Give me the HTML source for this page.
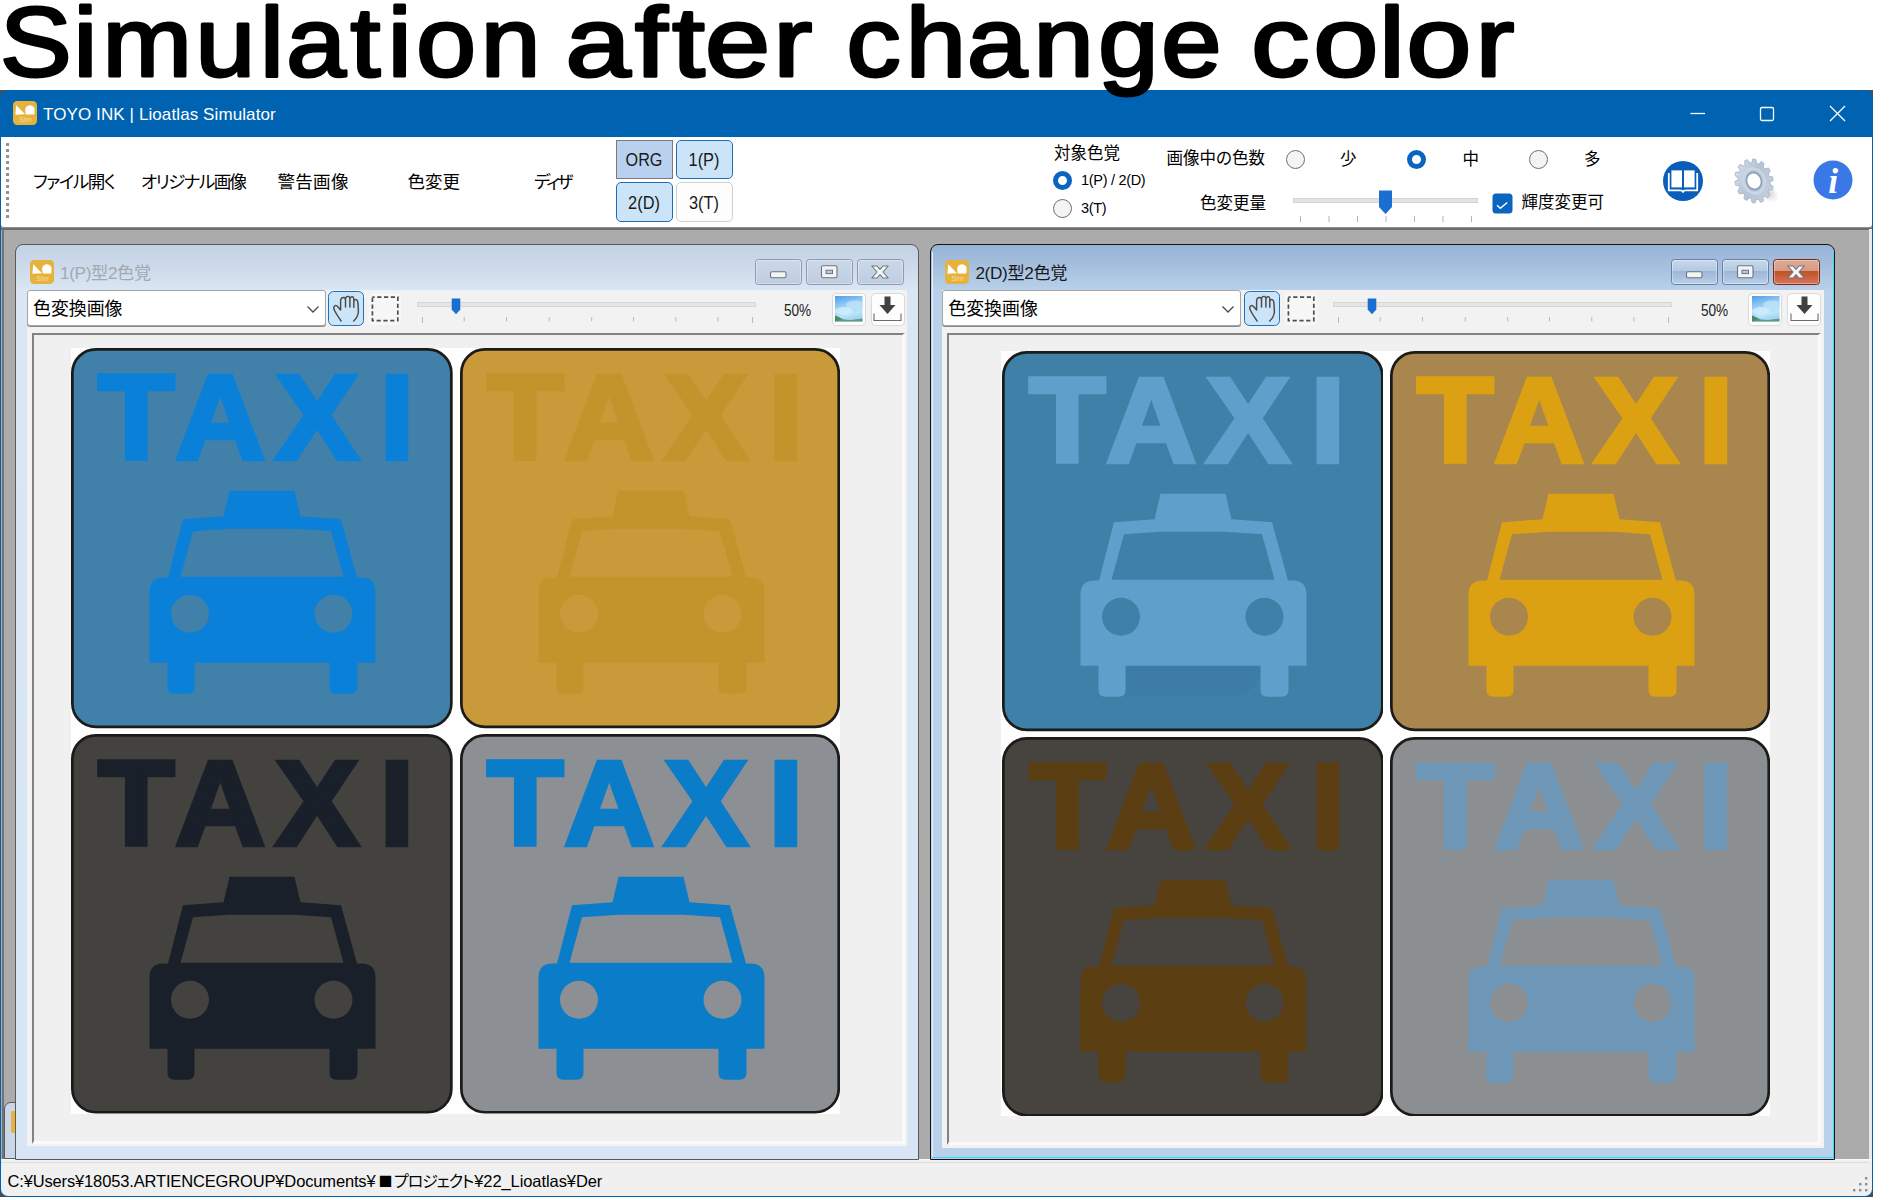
<!DOCTYPE html>
<html lang="ja"><head><meta charset="utf-8"><title>Simulation after change color</title>
<style>
*{box-sizing:border-box;margin:0;padding:0}
html,body{width:1900px;height:1200px;overflow:hidden;background:#fff}
body{position:relative;font-family:"Liberation Sans","Noto Sans CJK JP",sans-serif;color:#000}
div,svg{position:absolute}
.t{white-space:nowrap;line-height:1;font-size:17px}
.jp{font-family:"Liberation Sans","Noto Sans CJK JP",sans-serif;font-size:17.5px;font-feature-settings:"palt"}
#hdr{left:0;top:0;width:1900px;height:140px;z-index:50}
.bb{border:1px solid #1e6fbe;background:#cce4f7;border-radius:4px}
.rad{width:19.5px;height:19.5px;border-radius:50%;border:1.3px solid #707070;background:#f4f4f4}
.rad.on{border:5.5px solid #0a64c0;background:#fff}
</style></head>
<body>
<svg id="hdr" viewBox="0 0 1900 140"><g font-family="Liberation Sans, sans-serif" font-size="97.5" fill="#000" stroke="#000" stroke-width="3" stroke-linejoin="round" stroke-linecap="round"><text transform="scale(1.1005 1)" x="0.0 66.9 93.2 177.6 236.2 260.0 318.4 352.3 378.2 436.8" y="75.6">Simulation</text>
<text transform="scale(1.2003 1)" x="471.2 529.0 560.1 587.3 644.3" y="75.6">after</text>
<text transform="scale(1.1106 1)" x="762.2 815.5 870.7 930.5 988.8 1045.6" y="75.6">change</text>
<text transform="scale(1.1947 1)" x="1047.4 1099.4 1154.2 1177.2 1235.0" y="75.6">color</text>
</g></svg>
<div style="left:0px;top:90px;width:8px;height:8px;background:#4d4d4d"></div>
<div style="left:1865px;top:90px;width:8px;height:8px;background:#4d4d4d"></div>
<div style="left:0px;top:1189px;width:8px;height:8px;background:#4d4d4d"></div>
<div style="left:1865px;top:1189px;width:8px;height:8px;background:#4d4d4d"></div>
<div style="left:0;top:90px;width:1873px;height:1107px;background:#0063b1;border-radius:8px"></div>
<svg style="left:13px;top:101px;width:24px;height:24px" viewBox="0 0 24 24"><rect x="0" y="0" width="24" height="24" rx="4.2" fill="#e7b23b"/><path d="M3.2 4.2 L12 13.3 L2.4 13.7 Z" fill="#fff"/><path d="M12.2 9.6 A4.75 4.75 0 1 1 21.6 9.6 L21.3 13.4 L12.7 13.4 Z" fill="#fff"/><text x="12.3" y="20.8" font-size="7.4" font-style="italic" font-family="Liberation Sans, sans-serif" fill="#f6dfa6" text-anchor="middle">Sim</text></svg>
<div class="t" style="left:43px;top:105.6px;font-size:17px;color:#fff;letter-spacing:0.1px">TOYO INK | Lioatlas Simulator</div>
<svg style="left:1680px;top:95px;width:180px;height:36px" viewBox="0 0 180 36" fill="none" stroke="#fff" stroke-width="1.3"><path d="M10.5 18.5 H25"/><rect x="80.5" y="12.5" width="13" height="13" rx="1.5"/><path d="M150 11 L165 26 M165 11 L150 26"/></svg>
<div style="left:1px;top:137px;width:1871px;height:90px;background:#fff;border-radius:0 0 3px 3px;z-index:2"></div>
<div style="left:1px;top:220px;width:1871px;height:940px;background:#ababab"></div>
<div style="left:1px;top:226px;width:1871px;height:4px;background:linear-gradient(#9a9a9a,#8c8c8c 40%,#6e6e6e 60%,#6e6e6e 88%,#ababab)"></div>
<div style="left:2px;top:229px;width:1.5px;height:930px;background:#737373"></div>
<div style="left:1869px;top:229px;width:3px;height:931px;background:#e9e9e9"></div>
<div style="left:1px;top:1159px;width:1871px;height:37px;background:#f0f0f0;border-radius:0 0 7px 7px;border-top:1.5px solid #fafafa"></div>
<div class="t" style="left:7.5px;top:1172.6px;font-size:16.5px;letter-spacing:-0.15px">C:¥Users¥18053.ARTIENCEGROUP¥Documents¥<span style="font-family:'Noto Sans CJK JP',sans-serif;font-size:14px;letter-spacing:0;margin:0 1.5px 0 3px;position:relative;top:-1px">■</span><span style="font-family:'Liberation Sans','Noto Sans CJK JP',sans-serif;font-size:16px;font-feature-settings:'palt';letter-spacing:-1.1px">プロジェクト</span><span style="letter-spacing:-0.08px;margin-left:1px">¥22_Lioatlas¥Der</span></div>
<div style="left:1px;top:1162.3px;width:1868px;height:1px;background:#dedede"></div>
<svg style="left:1853px;top:1176.8px;width:16px;height:16px" viewBox="0 0 16 16" fill="#8e8e8e"><rect x="12" y="0" width="2.4" height="2.4"/><rect x="6" y="6" width="2.4" height="2.4"/><rect x="12" y="6" width="2.4" height="2.4"/><rect x="0" y="12" width="2.4" height="2.4"/><rect x="6" y="12" width="2.4" height="2.4"/><rect x="12" y="12" width="2.4" height="2.4"/></svg>
<svg style="left:5.5px;top:142.8px;width:4px;height:84px;z-index:3" viewBox="0 0 4 84" fill="#909090"><rect x="0" y="0" width="3.1" height="3.1" rx="0.6"/><rect x="0" y="6" width="3.1" height="3.1" rx="0.6"/><rect x="0" y="12" width="3.1" height="3.1" rx="0.6"/><rect x="0" y="18" width="3.1" height="3.1" rx="0.6"/><rect x="0" y="24" width="3.1" height="3.1" rx="0.6"/><rect x="0" y="30" width="3.1" height="3.1" rx="0.6"/><rect x="0" y="36" width="3.1" height="3.1" rx="0.6"/><rect x="0" y="42" width="3.1" height="3.1" rx="0.6"/><rect x="0" y="48" width="3.1" height="3.1" rx="0.6"/><rect x="0" y="54" width="3.1" height="3.1" rx="0.6"/><rect x="0" y="60" width="3.1" height="3.1" rx="0.6"/><rect x="0" y="66" width="3.1" height="3.1" rx="0.6"/><rect x="0" y="72" width="3.1" height="3.1" rx="0.6"/></svg>
<div class="t jp" style="z-index:3;left:33px;top:173.8px;font-size:17.5px;letter-spacing:-1.45px">ファイル開く</div>
<div class="t jp" style="z-index:3;left:141px;top:173.8px;font-size:17.5px;letter-spacing:-1.6px">オリジナル画像</div>
<div class="t jp" style="z-index:3;left:277.5px;top:173.8px;font-size:17.5px;letter-spacing:0.3px">警告画像</div>
<div class="t jp" style="z-index:3;left:407.5px;top:173.8px;font-size:17.5px;">色変更</div>
<div class="t jp" style="z-index:3;left:534px;top:173.8px;font-size:17.5px;letter-spacing:-3px">ディザ</div>
<div style="z-index:3;left:616.2px;top:140px;width:56.8px;height:38.8px;background:#b9d1ee;border:1.4px solid #7a7a7a"></div>
<div class="bb" style="z-index:3;left:676.2px;top:140px;width:56.8px;height:38.8px;border-width:1.7px;border-color:#1c70b8;border-radius:5px"></div>
<div class="bb" style="z-index:3;left:616.2px;top:182px;width:56.8px;height:40px;border-width:1.7px;border-color:#1c70b8;border-radius:5px"></div>
<div style="z-index:3;left:676.2px;top:182.3px;width:56.8px;height:39.5px;background:#fdfdfd;border:1.3px solid #d0d0d0;border-radius:5px"></div>
<div class="t" style="z-index:3;left:643.6px;top:160.3px;width:0;font-size:18.6px;color:#1a1a1a"><span style="position:absolute;left:0;top:0;transform:translate(-50%,-50%) scaleX(0.87);white-space:nowrap">ORG</span></div>
<div class="t" style="z-index:3;left:704px;top:159.6px;width:0;font-size:18.6px;color:#1a1a1a"><span style="position:absolute;left:0;top:0;transform:translate(-50%,-50%) scaleX(0.88);white-space:nowrap">1(P)</span></div>
<div class="t" style="z-index:3;left:643.5px;top:202.6px;width:0;font-size:18.6px;color:#1a1a1a"><span style="position:absolute;left:0;top:0;transform:translate(-50%,-50%) scaleX(0.88);white-space:nowrap">2(D)</span></div>
<div class="t" style="z-index:3;left:704px;top:202.8px;width:0;font-size:18.6px;color:#1a1a1a"><span style="position:absolute;left:0;top:0;transform:translate(-50%,-50%) scaleX(0.88);white-space:nowrap">3(T)</span></div>
<div class="t jp" style="z-index:3;left:1054px;top:145px;font-size:16.5px;">対象色覚</div>
<div class="rad on" style="z-index:3;left:1052.5px;top:170.5px"></div>
<div class="t" style="z-index:3;left:1081px;top:173px;font-size:14.5px;letter-spacing:-0.3px">1(P) / 2(D)</div>
<div class="rad" style="z-index:3;left:1052.5px;top:198.5px"></div>
<div class="t" style="z-index:3;left:1081px;top:201px;font-size:14.5px;letter-spacing:-0.3px">3(T)</div>
<div class="t jp" style="z-index:3;left:1166.5px;top:149.5px;font-size:16.5px;">画像中の色数</div>
<div class="rad" style="z-index:3;left:1285.5px;top:149.5px"></div>
<div class="t jp" style="z-index:3;left:1340px;top:150.6px;font-size:16.5px;">少</div>
<div class="rad on" style="z-index:3;left:1406.5px;top:149.5px"></div>
<div class="t jp" style="z-index:3;left:1462.5px;top:150.6px;font-size:16.5px;">中</div>
<div class="rad" style="z-index:3;left:1528.5px;top:149.5px"></div>
<div class="t jp" style="z-index:3;left:1584px;top:150.6px;font-size:16.5px;">多</div>
<div class="t jp" style="z-index:3;left:1200px;top:195.3px;font-size:16.5px;">色変更量</div>
<div style="z-index:3;left:1293px;top:197.5px;width:185px;height:5px;background:#e4e4e4;border:1px solid #d3d3d3"></div>
<svg style="z-index:3;left:1378px;top:190px;width:15px;height:25px" viewBox="0 0 15 25"><path d="M1 0.5 H14 V17 L7.5 24 L1 17 Z" fill="#1b6fd2"/></svg>
<svg style="z-index:3;left:1299.5px;top:216px;width:180px;height:7px" viewBox="0 0 180 7" fill="#b4b4b4"><rect x="0" y="0" width="1" height="6"/><rect x="28.5" y="0" width="1" height="6"/><rect x="57" y="0" width="1" height="6"/><rect x="85.5" y="0" width="1" height="6"/><rect x="114" y="0" width="1" height="6"/><rect x="142.5" y="0" width="1" height="6"/><rect x="171" y="0" width="1" height="6"/></svg>
<svg style="z-index:3;left:1492px;top:193px;width:21px;height:21px" viewBox="0 0 21 21"><rect x="0.5" y="0.5" width="20" height="20" rx="3.5" fill="#0a64c0"/><path d="M5 12.2 L8.3 15.3 L15.3 9.5" fill="none" stroke="#fff" stroke-width="1.35"/></svg>
<div class="t jp" style="z-index:3;left:1521.5px;top:193.6px;font-size:16.5px;">輝度変更可</div>
<svg style="z-index:3;left:1662px;top:160px;width:42px;height:42px" viewBox="-21 -21 42 42"><circle r="20" fill="#0a5db8"/><path d="M-14.2 -8 V9.4 H-3 Q0 9.4 0 11 Q0 9.4 3 9.4 H14.2 V-8" fill="none" stroke="#fff" stroke-width="1.8" stroke-linejoin="round"/><rect x="-11.6" y="-10.6" width="10.6" height="17" fill="#fff"/><rect x="1" y="-10.6" width="10.6" height="17" fill="#fff"/></svg>
<svg style="z-index:3;left:1728px;top:156px;width:56px;height:52px" viewBox="-26 -25 56 52"><defs><linearGradient id="gg" x1="0" y1="0" x2="1" y2="1"><stop offset="0" stop-color="#dfe8f2"/><stop offset="0.45" stop-color="#b4c3d6"/><stop offset="1" stop-color="#c9d3df"/></linearGradient><radialGradient id="gs" cx="0.5" cy="0.5" r="0.5"><stop offset="0" stop-color="#9a9a9a" stop-opacity="0.55"/><stop offset="1" stop-color="#bbb" stop-opacity="0"/></radialGradient></defs><ellipse cx="13" cy="11" rx="14" ry="9" fill="url(#gs)" transform="rotate(35 13 11)"/><g transform="rotate(-18) scale(1.0 1.17)"><path d="M15.80 0.00 L18.94 1.53 L18.46 4.49 L15.00 4.96 L14.24 6.86 L16.40 9.60 L14.68 12.06 L11.36 10.98 L9.85 12.35 L10.61 15.76 L8.00 17.24 L5.47 14.82 L3.52 15.40 L2.72 18.80 L-0.27 19.00 L-1.50 15.73 L-3.52 15.40 L-5.71 18.12 L-8.49 17.00 L-8.18 13.52 L-9.85 12.35 L-13.01 13.85 L-15.02 11.63 L-13.23 8.63 L-14.24 6.86 L-17.73 6.84 L-18.58 3.96 L-15.67 2.04 L-15.80 0.00 L-18.94 -1.53 L-18.46 -4.49 L-15.00 -4.96 L-14.24 -6.86 L-16.40 -9.60 L-14.68 -12.06 L-11.36 -10.98 L-9.85 -12.35 L-10.61 -15.76 L-8.00 -17.24 L-5.47 -14.82 L-3.52 -15.40 L-2.72 -18.80 L0.27 -19.00 L1.50 -15.73 L3.52 -15.40 L5.71 -18.12 L8.49 -17.00 L8.18 -13.52 L9.85 -12.35 L13.01 -13.85 L15.02 -11.63 L13.23 -8.63 L14.24 -6.86 L17.73 -6.84 L18.58 -3.96 L15.67 -2.04 Z" fill="url(#gg)" stroke="#a9b8cb" stroke-width="0.8" stroke-linejoin="round"/><circle r="10.6" fill="none" stroke="#cbd6e4" stroke-width="2.4"/><circle r="7.4" fill="#fff" stroke="#8fa3bd" stroke-width="1.7"/></g></svg>
<svg style="z-index:3;left:1812px;top:159px;width:42px;height:42px" viewBox="-21 -21 42 42"><circle r="19.5" fill="#3a78e6"/><text x="0.2" y="12.6" font-family="Liberation Serif, serif" font-style="italic" font-weight="bold" font-size="35.5" fill="#fff" text-anchor="middle">i</text></svg>
<div style="left:4px;top:1102px;width:14px;height:57px;background:#c9d7e8;border:1.5px solid #5a5a5a;border-radius:7px 0 0 0"></div>
<div style="left:11px;top:1111px;width:4px;height:22px;background:#e8b23c;border-radius:2px 0 0 2px"></div>
<div style="left:14.5px;top:243.5px;width:904.5px;height:916px;border:1.6px solid #5a5a5a;border-radius:8px 8px 0 0;background:linear-gradient(#c3d2e4 0px,#cddaea 22px,#dae6f4 46px,#d8e5f4 100%)"></div>
<svg style="left:30px;top:260px;width:24px;height:24px" viewBox="0 0 24 24"><rect x="0" y="0" width="24" height="24" rx="4.2" fill="#e7b23b"/><path d="M3.2 4.2 L12 13.3 L2.4 13.7 Z" fill="#fff"/><path d="M12.2 9.6 A4.75 4.75 0 1 1 21.6 9.6 L21.3 13.4 L12.7 13.4 Z" fill="#fff"/><text x="12.3" y="20.8" font-size="7.4" font-style="italic" font-family="Liberation Sans, sans-serif" fill="#f6dfa6" text-anchor="middle">Sim</text></svg>
<div class="t jp" style="left:60px;top:265.3px;font-size:17.2px;color:#a2a9b2;letter-spacing:-0.35px">1(P)型2色覚</div>
<div style="left:754.5px;top:258.5px;width:47px;height:26.5px;border:1px solid #8c9bb1;border-radius:3.5px;background:linear-gradient(#ccd8e7 0%,#bfcde0 100%);box-shadow:inset 0 0 0 1px rgba(255,255,255,.35)"></div>
<div style="left:805.5px;top:258.5px;width:47px;height:26.5px;border:1px solid #8c9bb1;border-radius:3.5px;background:linear-gradient(#ccd8e7 0%,#bfcde0 100%);box-shadow:inset 0 0 0 1px rgba(255,255,255,.35)"></div>
<div style="left:856.5px;top:258.5px;width:47px;height:26.5px;border:1px solid #8c9bb1;border-radius:3.5px;background:linear-gradient(#ccd8e7 0%,#bfcde0 100%);box-shadow:inset 0 0 0 1px rgba(255,255,255,.35)"></div>
<svg style="left:754.5px;top:258.5px;width:150px;height:27px" viewBox="0 0 150 27"><rect x="15.5" y="12.8" width="15.5" height="6" rx="1.5" fill="#f4f4f4" stroke="#6b7486" stroke-width="1.1"/><rect x="66.5" y="6.8" width="15.5" height="12" rx="1.5" fill="#f4f4f4" stroke="#6b7486" stroke-width="1.1"/><rect x="71" y="11.2" width="6.5" height="3.4" fill="#b9c6d8" stroke="#6b7486" stroke-width="1"/><path d="M116.8 7 H122 L125 10.3 L128 7 H133.2 L127.9 13 L133.2 19 H128 L125 15.7 L122 19 H116.8 L122.1 13 Z" fill="#f6f6f6" stroke="#6b7486" stroke-width="1.1" stroke-linejoin="round"/></svg>
<div style="left:26.5px;top:290px;width:880px;height:856px;background:#f2f2f2"></div>
<div style="left:27px;top:290.3px;width:299px;height:35.5px;background:#fff;border:1px solid #a6a6a6;border-radius:3px;box-shadow:0 1px 0 #8a8a8a"></div>
<div class="t jp" style="left:33px;top:300.6px;font-size:17.9px;letter-spacing:0">色変換画像</div>
<svg style="left:305.5px;top:305px;width:14px;height:9px" viewBox="0 0 14 9"><path d="M1.5 1.5 L7 7 L12.5 1.5" fill="none" stroke="#4a4a4a" stroke-width="1.3"/></svg>
<div class="bb" style="left:328.1px;top:291.2px;width:35.8px;height:34.6px;border:1.5px solid #1c72bd;border-radius:5.5px"></div>
<svg style="left:328px;top:291px;width:36px;height:35px" viewBox="0 0 36 35" fill="none" stroke="#4a4a4a" stroke-width="1.45" stroke-linecap="round" stroke-linejoin="round"><path d="M13.1 30 C11 27 8 22.5 6.4 19.3 C5.4 17.2 5.6 15.8 6.6 15 C7.8 14.2 9 14.8 10 16 L12.6 19 V10 C12.6 7.5 14 6.4 15.6 6.5 C17 6.6 17.5 7.6 17.5 9 V16 M17.5 8.5 C17.5 6.2 18.8 5.3 20.2 5.4 C21.6 5.5 21.9 6.5 21.9 8 V16 M21.9 8 C22 6.4 23.2 5.6 24.5 5.8 C25.7 6 25.8 7 25.8 8.5 V16.2 M25.8 10.5 C26 9 27 8.4 28.2 8.6 C29.6 9 29.9 10.5 30 13 C30.3 17 30.6 20 30.2 22.5 C29.7 25.5 27.8 28 25.7 30"/></svg>
<div style="left:368.8px;top:293px;width:32.5px;height:31.5px;background:#f7f7f7;border-radius:4px"></div>
<svg style="left:370px;top:295px;width:30px;height:28px" viewBox="0 0 30 28"><rect x="2.4" y="2.1" width="25.4" height="23.6" fill="none" stroke="#4d4d4d" stroke-width="1.7" stroke-dasharray="4.2 2.6" stroke-dashoffset="2"/></svg>
<div style="left:416.5px;top:302.2px;width:339px;height:5px;background:#e6e6e6;border:1px solid #d6d6d6"></div>
<svg style="left:451px;top:298px;width:10px;height:17px" viewBox="0 0 10 17"><path d="M0.7 0.5 H9.3 V11.5 L5 16.2 L0.7 11.5 Z" fill="#1b6fd2"/></svg>
<svg style="left:422px;top:316.5px;width:340px;height:7px" viewBox="0 0 340 7" fill="#b9b9b9"><rect x="0" y="0" width="1" height="6"/><rect x="41.7" y="0" width="1" height="4.4"/><rect x="84" y="0" width="1" height="4.4"/><rect x="126.7" y="0" width="1" height="4.4"/><rect x="169.2" y="0" width="1" height="4.4"/><rect x="211" y="0" width="1" height="4.4"/><rect x="253.3" y="0" width="1" height="4.4"/><rect x="295.4" y="0" width="1" height="4.4"/><rect x="330" y="0" width="1" height="6"/></svg>
<div class="t" style="left:784px;top:302px;font-size:16.2px;transform-origin:0 0;transform:scaleX(0.84);color:#222">50%</div>
<div style="left:831.5px;top:292.5px;width:34px;height:33px;background:#fdfdfd;border:1px solid #d9d9d9;border-radius:4.5px"></div>
<svg style="left:835px;top:296px;width:28px;height:26px" viewBox="0 0 28 26"><defs><linearGradient id="sk0" x1="0" y1="0" x2="0.3" y2="1"><stop offset="0" stop-color="#4f9bea"/><stop offset="0.4" stop-color="#8fcbf4"/><stop offset="0.8" stop-color="#b9e6fb"/><stop offset="1" stop-color="#a5d4f0"/></linearGradient></defs><rect width="27.5" height="25.5" fill="url(#sk0)"/><ellipse cx="20" cy="9" rx="9" ry="4.5" fill="#bfe2f8" opacity="0.8"/><ellipse cx="9" cy="15" rx="9" ry="4" fill="#d4eefc" opacity="0.8"/><path d="M0 19.5 L4 21 L9 23.5 L16 24 L27.5 22.5 V25.5 H0 Z" fill="#5e9a8a"/><path d="M0 19.5 L3 21 L6 23.8 L0 25.5 Z" fill="#4c8a6c"/></svg>
<div style="left:870.5px;top:292.5px;width:34px;height:33px;background:#fdfdfd;border:1px solid #d9d9d9;border-radius:4.5px"></div>
<svg style="left:873px;top:295px;width:30px;height:28px" viewBox="0 0 30 28"><path d="M11.5 1.5 H17.5 V10 H22.5 L14.5 19 L6.5 10 H11.5 Z" fill="#414141"/><path d="M1 18.5 V25.5 H28 V18.5" fill="none" stroke="#6a6a6a" stroke-width="1.1"/></svg>
<div style="left:31.5px;top:332.5px;width:873.5px;height:811px;background:#f0f0f0;border-top:2.2px solid #828282;border-left:2.2px solid #828282;border-right:3.5px solid #fafafa;border-bottom:3px solid #fafafa"></div>
<div style="left:71.3px;top:348.3px;width:768.8px;height:765.6px;background:#fefefe"></div>
<svg style="left:71.4px;top:348.3px;width:381.7px;height:380.3px" viewBox="0 0 381.7 380.3"><rect x="1.35" y="1.35" width="379" height="377.6" rx="23.5" ry="23.5" fill="#4181a9" stroke="#1b1b1a" stroke-width="2.7"/><g transform="translate(0.5 0.7)" fill="#0a80d8"><path fill-rule="evenodd" d="M158 142 H223 L229 167.5 L269.5 170.5 L285.5 228.8 H290 Q304 228.8 304 243 V314 H286 V338 Q286 345 279 345 H265 Q258 345 258 338 V314 H123 V338 Q123 345 116 345 H103 Q96 345 96 338 V314 H78 V243 Q78 228.8 92 228.8 H96.5 L111.5 170.5 L152 167.5 Z M121.5 182.5 L109 228 H272 L259.5 182.5 L223 180 H158 Z M118.5 246 A19 19 0 1 0 118.5 284 A19 19 0 1 0 118.5 246 Z M262 246 A19 19 0 1 0 262 284 A19 19 0 1 0 262 246 Z"/><text transform="scale(1.0412 1)" x="25.5 99.4 195.8 295.8" y="110.80" font-family="Liberation Sans, sans-serif" font-weight="bold" font-size="120.35" stroke="#0a80d8" stroke-width="4.4" stroke-linejoin="miter">TAXI</text></g></svg>
<svg style="left:460px;top:348.3px;width:380.1px;height:380.3px" viewBox="0 0 380.1 380.3"><rect x="1.35" y="1.35" width="377.4" height="377.6" rx="23.5" ry="23.5" fill="#c99a39" stroke="#1b1b1a" stroke-width="2.7"/><g transform="translate(0.5 0.7)" fill="#c3932c"><path fill-rule="evenodd" d="M158 142 H223 L229 167.5 L269.5 170.5 L285.5 228.8 H290 Q304 228.8 304 243 V314 H286 V338 Q286 345 279 345 H265 Q258 345 258 338 V314 H123 V338 Q123 345 116 345 H103 Q96 345 96 338 V314 H78 V243 Q78 228.8 92 228.8 H96.5 L111.5 170.5 L152 167.5 Z M121.5 182.5 L109 228 H272 L259.5 182.5 L223 180 H158 Z M118.5 246 A19 19 0 1 0 118.5 284 A19 19 0 1 0 118.5 246 Z M262 246 A19 19 0 1 0 262 284 A19 19 0 1 0 262 246 Z"/><text transform="scale(1.0412 1)" x="25.5 99.4 195.8 295.8" y="110.80" font-family="Liberation Sans, sans-serif" font-weight="bold" font-size="120.35" stroke="#c3932c" stroke-width="4.4" stroke-linejoin="miter">TAXI</text></g></svg>
<svg style="left:71.4px;top:734.1px;width:381.7px;height:379.6px" viewBox="0 0 381.7 379.6"><rect x="1.35" y="1.35" width="379" height="376.9" rx="23.5" ry="23.5" fill="#44423f" stroke="#1b1b1a" stroke-width="2.7"/><g transform="translate(0.5 0.7)" fill="#1a2029"><path fill-rule="evenodd" d="M158 142 H223 L229 167.5 L269.5 170.5 L285.5 228.8 H290 Q304 228.8 304 243 V314 H286 V338 Q286 345 279 345 H265 Q258 345 258 338 V314 H123 V338 Q123 345 116 345 H103 Q96 345 96 338 V314 H78 V243 Q78 228.8 92 228.8 H96.5 L111.5 170.5 L152 167.5 Z M121.5 182.5 L109 228 H272 L259.5 182.5 L223 180 H158 Z M118.5 246 A19 19 0 1 0 118.5 284 A19 19 0 1 0 118.5 246 Z M262 246 A19 19 0 1 0 262 284 A19 19 0 1 0 262 246 Z"/><text transform="scale(1.0412 1)" x="25.5 99.4 195.8 295.8" y="110.80" font-family="Liberation Sans, sans-serif" font-weight="bold" font-size="120.35" stroke="#1a2029" stroke-width="4.4" stroke-linejoin="miter">TAXI</text></g></svg>
<svg style="left:460px;top:734.1px;width:380.1px;height:379.6px" viewBox="0 0 380.1 379.6"><rect x="1.35" y="1.35" width="377.4" height="376.9" rx="23.5" ry="23.5" fill="#8c9094" stroke="#1b1b1a" stroke-width="2.7"/><g transform="translate(0.5 0.7)" fill="#0a7cc8"><path fill-rule="evenodd" d="M158 142 H223 L229 167.5 L269.5 170.5 L285.5 228.8 H290 Q304 228.8 304 243 V314 H286 V338 Q286 345 279 345 H265 Q258 345 258 338 V314 H123 V338 Q123 345 116 345 H103 Q96 345 96 338 V314 H78 V243 Q78 228.8 92 228.8 H96.5 L111.5 170.5 L152 167.5 Z M121.5 182.5 L109 228 H272 L259.5 182.5 L223 180 H158 Z M118.5 246 A19 19 0 1 0 118.5 284 A19 19 0 1 0 118.5 246 Z M262 246 A19 19 0 1 0 262 284 A19 19 0 1 0 262 246 Z"/><text transform="scale(1.0412 1)" x="25.5 99.4 195.8 295.8" y="110.80" font-family="Liberation Sans, sans-serif" font-weight="bold" font-size="120.35" stroke="#0a7cc8" stroke-width="4.4" stroke-linejoin="miter">TAXI</text></g></svg>
<div style="left:929.8px;top:243.5px;width:905.3px;height:916px;border:1.6px solid #151515;border-radius:8px 8px 0 0;background:linear-gradient(#98b4d5 0px,#a6c0de 22px,#b9d1ea 46px,#b9d1ea 100%)"></div>
<div style="left:931.602px;top:252px;width:1.2px;height:905px;background:#e6f0fa"></div>
<div style="left:1833.2px;top:250px;width:1px;height:907.5px;background:#40d8f8"></div>
<div style="left:932.304px;top:1156.5px;width:901px;height:1px;background:#40d8f8"></div>
<svg style="left:945.327px;top:260px;width:24px;height:24px" viewBox="0 0 24 24"><rect x="0" y="0" width="24" height="24" rx="4.2" fill="#e7b23b"/><path d="M3.2 4.2 L12 13.3 L2.4 13.7 Z" fill="#fff"/><path d="M12.2 9.6 A4.75 4.75 0 1 1 21.6 9.6 L21.3 13.4 L12.7 13.4 Z" fill="#fff"/><text x="12.3" y="20.8" font-size="7.4" font-style="italic" font-family="Liberation Sans, sans-serif" fill="#f6dfa6" text-anchor="middle">Sim</text></svg>
<div class="t jp" style="left:975.38px;top:265.3px;font-size:17.2px;color:#1a1a1a;letter-spacing:-0.35px">2(D)型2色覚</div>
<div style="left:1671.11px;top:258.5px;width:47px;height:26.5px;border:1px solid #6a82a2;border-radius:3.5px;background:linear-gradient(#c6d8ed 0%,#b4cae3 44%,#9bb6d5 46%,#a9c2de 75%,#bdd2e9 100%);box-shadow:inset 0 0 0 1px rgba(255,255,255,.35)"></div>
<div style="left:1722.2px;top:258.5px;width:47px;height:26.5px;border:1px solid #6a82a2;border-radius:3.5px;background:linear-gradient(#c6d8ed 0%,#b4cae3 44%,#9bb6d5 46%,#a9c2de 75%,#bdd2e9 100%);box-shadow:inset 0 0 0 1px rgba(255,255,255,.35)"></div>
<div style="left:1773.29px;top:258.5px;width:47px;height:26.5px;border:1px solid #7c2a1c;border-radius:3.5px;background:linear-gradient(#dcaa96 0%,#d89a84 44%,#bd5428 46%,#c8603a 70%,#d9755c 100%);box-shadow:inset 0 0 0 1px rgba(255,255,255,.35)"></div>
<svg style="left:1671.11px;top:258.5px;width:150px;height:27px" viewBox="0 0 150 27"><rect x="15.5" y="12.8" width="15.5" height="6" rx="1.5" fill="#f4f4f4" stroke="#6b7486" stroke-width="1.1"/><rect x="66.5" y="6.8" width="15.5" height="12" rx="1.5" fill="#f4f4f4" stroke="#6b7486" stroke-width="1.1"/><rect x="71" y="11.2" width="6.5" height="3.4" fill="#b9c6d8" stroke="#6b7486" stroke-width="1"/><path d="M116.8 7 H122 L125 10.3 L128 7 H133.2 L127.9 13 L133.2 19 H128 L125 15.7 L122 19 H116.8 L122.1 13 Z" fill="#f6f6f6" stroke="#6b7486" stroke-width="1.1" stroke-linejoin="round"/></svg>
<div style="left:941.82px;top:290px;width:882.5px;height:858.3px;background:#f2f2f2"></div>
<div style="left:942.321px;top:290.3px;width:299px;height:35.5px;background:#fff;border:1px solid #a6a6a6;border-radius:3px;box-shadow:0 1px 0 #8a8a8a"></div>
<div class="t jp" style="left:948.332px;top:300.6px;font-size:17.9px;letter-spacing:0">色変換画像</div>
<svg style="left:1221.31px;top:305px;width:14px;height:9px" viewBox="0 0 14 9"><path d="M1.5 1.5 L7 7 L12.5 1.5" fill="none" stroke="#4a4a4a" stroke-width="1.3"/></svg>
<div class="bb" style="left:1243.95px;top:291.2px;width:35.8px;height:34.6px;border:1.5px solid #1c72bd;border-radius:5.5px"></div>
<svg style="left:1243.85px;top:291px;width:36px;height:35px" viewBox="0 0 36 35" fill="none" stroke="#4a4a4a" stroke-width="1.45" stroke-linecap="round" stroke-linejoin="round"><path d="M13.1 30 C11 27 8 22.5 6.4 19.3 C5.4 17.2 5.6 15.8 6.6 15 C7.8 14.2 9 14.8 10 16 L12.6 19 V10 C12.6 7.5 14 6.4 15.6 6.5 C17 6.6 17.5 7.6 17.5 9 V16 M17.5 8.5 C17.5 6.2 18.8 5.3 20.2 5.4 C21.6 5.5 21.9 6.5 21.9 8 V16 M21.9 8 C22 6.4 23.2 5.6 24.5 5.8 C25.7 6 25.8 7 25.8 8.5 V16.2 M25.8 10.5 C26 9 27 8.4 28.2 8.6 C29.6 9 29.9 10.5 30 13 C30.3 17 30.6 20 30.2 22.5 C29.7 25.5 27.8 28 25.7 30"/></svg>
<div style="left:1284.73px;top:293px;width:32.5px;height:31.5px;background:#f7f7f7;border-radius:4px"></div>
<svg style="left:1285.93px;top:295px;width:30px;height:28px" viewBox="0 0 30 28"><rect x="2.4" y="2.1" width="25.4" height="23.6" fill="none" stroke="#4d4d4d" stroke-width="1.7" stroke-dasharray="4.2 2.6" stroke-dashoffset="2"/></svg>
<div style="left:1332.51px;top:302.2px;width:339px;height:5px;background:#e6e6e6;border:1px solid #d6d6d6"></div>
<svg style="left:1367.07px;top:298px;width:10px;height:17px" viewBox="0 0 10 17"><path d="M0.7 0.5 H9.3 V11.5 L5 16.2 L0.7 11.5 Z" fill="#1b6fd2"/></svg>
<svg style="left:1338.02px;top:316.5px;width:340px;height:7px" viewBox="0 0 340 7" fill="#b9b9b9"><rect x="0" y="0" width="1" height="6"/><rect x="41.7" y="0" width="1" height="4.4"/><rect x="84" y="0" width="1" height="4.4"/><rect x="126.7" y="0" width="1" height="4.4"/><rect x="169.2" y="0" width="1" height="4.4"/><rect x="211" y="0" width="1" height="4.4"/><rect x="253.3" y="0" width="1" height="4.4"/><rect x="295.4" y="0" width="1" height="4.4"/><rect x="330" y="0" width="1" height="6"/></svg>
<div class="t" style="left:1700.66px;top:302px;font-size:16.2px;transform-origin:0 0;transform:scaleX(0.84);color:#222">50%</div>
<div style="left:1748.25px;top:292.5px;width:34px;height:33px;background:#fdfdfd;border:1px solid #d9d9d9;border-radius:4.5px"></div>
<svg style="left:1751.75px;top:296px;width:28px;height:26px" viewBox="0 0 28 26"><defs><linearGradient id="sk915" x1="0" y1="0" x2="0.3" y2="1"><stop offset="0" stop-color="#4f9bea"/><stop offset="0.4" stop-color="#8fcbf4"/><stop offset="0.8" stop-color="#b9e6fb"/><stop offset="1" stop-color="#a5d4f0"/></linearGradient></defs><rect width="27.5" height="25.5" fill="url(#sk915)"/><ellipse cx="20" cy="9" rx="9" ry="4.5" fill="#bfe2f8" opacity="0.8"/><ellipse cx="9" cy="15" rx="9" ry="4" fill="#d4eefc" opacity="0.8"/><path d="M0 19.5 L4 21 L9 23.5 L16 24 L27.5 22.5 V25.5 H0 Z" fill="#5e9a8a"/><path d="M0 19.5 L3 21 L6 23.8 L0 25.5 Z" fill="#4c8a6c"/></svg>
<div style="left:1787.31px;top:292.5px;width:34px;height:33px;background:#fdfdfd;border:1px solid #d9d9d9;border-radius:4.5px"></div>
<svg style="left:1789.82px;top:295px;width:30px;height:28px" viewBox="0 0 30 28"><path d="M11.5 1.5 H17.5 V10 H22.5 L14.5 19 L6.5 10 H11.5 Z" fill="#414141"/><path d="M1 18.5 V25.5 H28 V18.5" fill="none" stroke="#6a6a6a" stroke-width="1.1"/></svg>
<div style="left:946.829px;top:332.5px;width:873.8px;height:812.5px;background:#f0f0f0;border-top:2.2px solid #828282;border-left:2.2px solid #828282;border-right:3.5px solid #fafafa;border-bottom:3px solid #fafafa"></div>
<div style="left:1001.4px;top:351.3px;width:768.8px;height:765px;background:#fefefe"></div>
<svg style="left:1001.5px;top:351.3px;width:381.7px;height:380.3px" viewBox="0 0 381.7 380.3"><rect x="1.35" y="1.35" width="379" height="377.6" rx="23.5" ry="23.5" fill="#3f80a8" stroke="#1b1b1a" stroke-width="2.7"/><g transform="translate(0.5 0.7)" fill="#5f9fcc"><path d="M124 314 H258 V322 Q250 342 236 344 H124 Z" fill="#3c7ca6"/><path fill-rule="evenodd" d="M158 142 H223 L229 167.5 L269.5 170.5 L285.5 228.8 H290 Q304 228.8 304 243 V314 H286 V338 Q286 345 279 345 H265 Q258 345 258 338 V314 H123 V338 Q123 345 116 345 H103 Q96 345 96 338 V314 H78 V243 Q78 228.8 92 228.8 H96.5 L111.5 170.5 L152 167.5 Z M121.5 182.5 L109 228 H272 L259.5 182.5 L223 180 H158 Z M118.5 246 A19 19 0 1 0 118.5 284 A19 19 0 1 0 118.5 246 Z M262 246 A19 19 0 1 0 262 284 A19 19 0 1 0 262 246 Z"/><text transform="scale(1.0412 1)" x="25.5 99.4 195.8 295.8" y="110.80" font-family="Liberation Sans, sans-serif" font-weight="bold" font-size="120.35" stroke="#5f9fcc" stroke-width="4.4" stroke-linejoin="miter">TAXI</text></g></svg>
<svg style="left:1390.1px;top:351.3px;width:380.1px;height:380.3px" viewBox="0 0 380.1 380.3"><rect x="1.35" y="1.35" width="377.4" height="377.6" rx="23.5" ry="23.5" fill="#a9864e" stroke="#1b1b1a" stroke-width="2.7"/><g transform="translate(0.5 0.7)" fill="#dca112"><path fill-rule="evenodd" d="M158 142 H223 L229 167.5 L269.5 170.5 L285.5 228.8 H290 Q304 228.8 304 243 V314 H286 V338 Q286 345 279 345 H265 Q258 345 258 338 V314 H123 V338 Q123 345 116 345 H103 Q96 345 96 338 V314 H78 V243 Q78 228.8 92 228.8 H96.5 L111.5 170.5 L152 167.5 Z M121.5 182.5 L109 228 H272 L259.5 182.5 L223 180 H158 Z M118.5 246 A19 19 0 1 0 118.5 284 A19 19 0 1 0 118.5 246 Z M262 246 A19 19 0 1 0 262 284 A19 19 0 1 0 262 246 Z"/><text transform="scale(1.0412 1)" x="25.5 99.4 195.8 295.8" y="110.80" font-family="Liberation Sans, sans-serif" font-weight="bold" font-size="120.35" stroke="#dca112" stroke-width="4.4" stroke-linejoin="miter">TAXI</text></g></svg>
<svg style="left:1001.5px;top:736.6px;width:381.7px;height:379.6px" viewBox="0 0 381.7 379.6"><rect x="1.35" y="1.35" width="379" height="376.9" rx="23.5" ry="23.5" fill="#47433f" stroke="#1b1b1a" stroke-width="2.7"/><g transform="translate(0.5 0.7)" fill="#5b3f13"><path fill-rule="evenodd" d="M158 142 H223 L229 167.5 L269.5 170.5 L285.5 228.8 H290 Q304 228.8 304 243 V314 H286 V338 Q286 345 279 345 H265 Q258 345 258 338 V314 H123 V338 Q123 345 116 345 H103 Q96 345 96 338 V314 H78 V243 Q78 228.8 92 228.8 H96.5 L111.5 170.5 L152 167.5 Z M121.5 182.5 L109 228 H272 L259.5 182.5 L223 180 H158 Z M118.5 246 A19 19 0 1 0 118.5 284 A19 19 0 1 0 118.5 246 Z M262 246 A19 19 0 1 0 262 284 A19 19 0 1 0 262 246 Z"/><text transform="scale(1.0412 1)" x="25.5 99.4 195.8 295.8" y="110.80" font-family="Liberation Sans, sans-serif" font-weight="bold" font-size="120.35" stroke="#5b3f13" stroke-width="4.4" stroke-linejoin="miter">TAXI</text></g></svg>
<svg style="left:1390.1px;top:736.6px;width:380.1px;height:379.6px" viewBox="0 0 380.1 379.6"><rect x="1.35" y="1.35" width="377.4" height="376.9" rx="23.5" ry="23.5" fill="#8b8f91" stroke="#1b1b1a" stroke-width="2.7"/><g transform="translate(0.5 0.7)" fill="#6f98b8"><path fill-rule="evenodd" d="M158 142 H223 L229 167.5 L269.5 170.5 L285.5 228.8 H290 Q304 228.8 304 243 V314 H286 V338 Q286 345 279 345 H265 Q258 345 258 338 V314 H123 V338 Q123 345 116 345 H103 Q96 345 96 338 V314 H78 V243 Q78 228.8 92 228.8 H96.5 L111.5 170.5 L152 167.5 Z M121.5 182.5 L109 228 H272 L259.5 182.5 L223 180 H158 Z M118.5 246 A19 19 0 1 0 118.5 284 A19 19 0 1 0 118.5 246 Z M262 246 A19 19 0 1 0 262 284 A19 19 0 1 0 262 246 Z"/><text transform="scale(1.0412 1)" x="25.5 99.4 195.8 295.8" y="110.80" font-family="Liberation Sans, sans-serif" font-weight="bold" font-size="120.35" stroke="#6f98b8" stroke-width="4.4" stroke-linejoin="miter">TAXI</text></g></svg>
</body></html>
